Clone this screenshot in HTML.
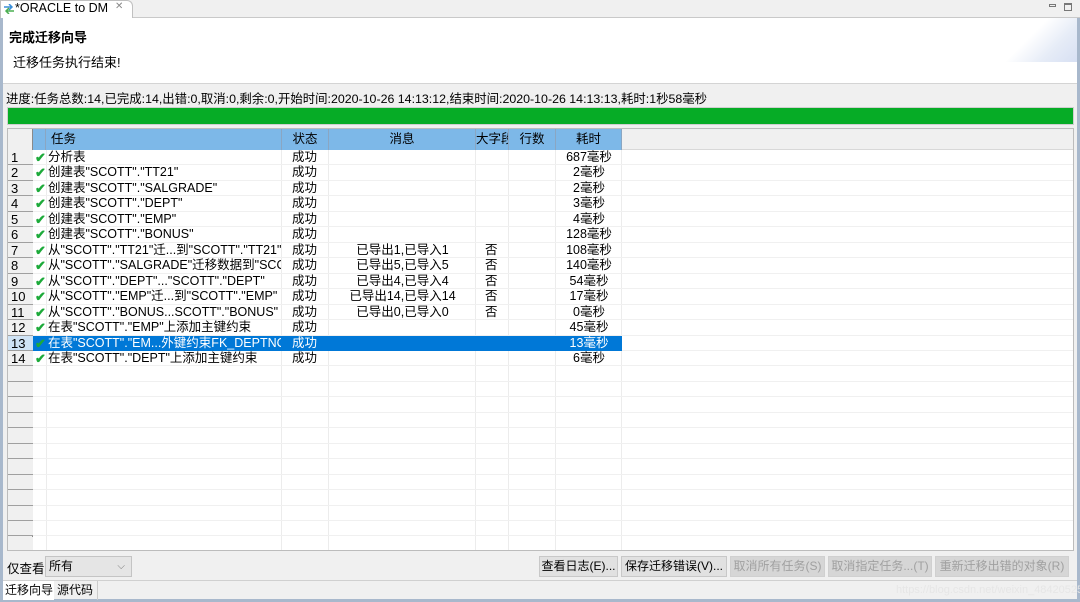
<!DOCTYPE html>
<html><head><meta charset="utf-8"><style>
*{margin:0;padding:0;box-sizing:border-box}
body{width:1080px;height:602px;overflow:hidden;background:#f0f0f0;position:relative;font-family:"Liberation Sans","Noto Sans CJK SC",sans-serif;font-size:12px;color:#000}
.a{position:absolute}
.btn{position:absolute;top:556px;height:21px;border:1px solid #c8c8c8;background:#e1e1e1;font-size:12px;line-height:19px;text-align:center;white-space:nowrap}
.dis{color:#a0a0a0;background:#d6d6d6;border-color:#d0d0d0}
.hc{position:absolute;top:0;height:21px;line-height:20px;border-right:1px solid #8aa6c2;text-align:center;overflow:hidden;white-space:nowrap;font-size:12.5px}
.row{position:absolute;left:0;height:15.46px;width:1066px;border-bottom:1px solid #f0f0f0}
.c{position:absolute;top:0;height:15px;line-height:15px;white-space:nowrap;overflow:hidden;font-size:12.5px}
.vl{position:absolute;top:21px;bottom:0;width:1px;background:#ececec}
</style></head><body>
<div class="a" style="left:0;top:0;width:1080px;height:18px;background:#f0f0f0;border-bottom:1px solid #c9c9c9"></div>
<div class="a" style="left:0;top:0;width:133px;height:18px;background:#fff;border:1px solid #c0c0c0;border-bottom:none;border-radius:0 6px 0 0"></div>
<svg class="a" style="left:3px;top:4px" width="12" height="10"><path d="M1 3h8M6 0l3 3-3 3" stroke="#3b8fd9" fill="none" stroke-width="1.5"/><path d="M11 7H3M6 4L3 7l3 3" stroke="#4caf50" fill="none" stroke-width="1.5"/></svg>
<div class="a" style="left:15px;top:1px;font-size:12.5px;color:#000">*ORACLE to DM</div>
<div class="a" style="left:115px;top:1px;font-size:10px;color:#888">✕</div>
<div class="a" style="left:1049px;top:4px;width:7px;height:3px;border:1px solid #777"></div>
<div class="a" style="left:1064px;top:3px;width:8px;height:8px;border:1px solid #777;border-top-width:2px"></div>
<div class="a" style="left:0;top:18px;width:3px;height:584px;background:#a8b8cc"></div>
<div class="a" style="left:1077px;top:18px;width:3px;height:584px;background:#a8b8cc"></div>
<div class="a" style="left:0;top:599px;width:1080px;height:3px;background:#a8b8cc"></div>
<div class="a" style="left:3px;top:18px;width:1074px;height:66px;background:#fff;border-bottom:1px solid #d4d4d4"></div>
<div class="a" style="left:1000px;top:18px;width:77px;height:44px;background:linear-gradient(135deg,#fff 40%,#e6ecf7 70%,#d7e0f3)"></div>
<div class="a" style="left:9px;top:27px;font-size:13px;font-weight:bold">完成迁移向导</div>
<div class="a" style="left:13px;top:52px;font-size:13px">迁移任务执行结束!</div>
<div class="a" style="left:6px;top:89px;font-size:12.4px">进度:任务总数:14,已完成:14,出错:0,取消:0,剩余:0,开始时间:2020-10-26 14:13:12,结束时间:2020-10-26 14:13:13,耗时:1秒58毫秒</div>
<div class="a" style="left:7px;top:107px;width:1067px;height:18px;background:#06ac26;border:1px solid #cfcfcf"></div>
<div class="a" style="left:7px;top:128px;width:1067px;height:423px;background:#fff;border:1px solid #bcbcbc;overflow:hidden">
 <div class="a" style="left:0;top:0;width:1067px;height:21px;background:#f0f0f0;border-bottom:1px solid #d8d8d8"></div>
 <div class="a" style="left:0;top:0;width:25px;height:100%;background:#f0f0f0;border-right:1px solid #8a8a8a"></div>
 <div class="a" style="left:25px;top:0;width:589px;height:21px;background:#7db8e8"></div>
 <div class="hc" style="left:25px;width:13px"></div>
 <div class="hc" style="left:38px;width:236px;text-align:left;padding-left:5px">任务</div>
 <div class="hc" style="left:274px;width:47px">状态</div>
 <div class="hc" style="left:321px;width:147px">消息</div>
 <div class="hc" style="left:468px;width:33px;text-align:left">大字段</div>
 <div class="hc" style="left:501px;width:47px">行数</div>
 <div class="hc" style="left:548px;width:66px">耗时</div>
 <div class="vl" style="left:38px"></div><div class="vl" style="left:273px"></div><div class="vl" style="left:320px"></div><div class="vl" style="left:467px"></div><div class="vl" style="left:500px"></div><div class="vl" style="left:547px"></div><div class="vl" style="left:613px"></div>
 <div id="rows"></div>
</div>
<div class="a" style="left:7px;top:558px;font-size:12.5px">仅查看</div>
<div class="a" style="left:45px;top:556px;width:87px;height:21px;background:#e5e5e5;border:1px solid #c4c4c4;font-size:12px;line-height:19px;padding-left:3px">所有<span style="position:absolute;right:6px;top:0;color:#777;font-size:10px">⌵</span></div>
<div class="btn" style="left:539px;width:79px">查看日志(E)...</div>
<div class="btn" style="left:621px;width:106px">保存迁移错误(V)...</div>
<div class="btn dis" style="left:730px;width:95px">取消所有任务(S)</div>
<div class="btn dis" style="left:828px;width:104px">取消指定任务...(T)</div>
<div class="btn dis" style="left:935px;width:134px">重新迁移出错的对象(R)</div>
<div class="a" style="left:3px;top:580px;width:1074px;height:1px;background:#d0d0d0"></div>
<div class="a" style="left:3px;top:581px;width:51px;height:19px;background:#fff;font-size:12px;line-height:18px;padding-left:2px">迁移向导</div>
<div class="a" style="left:54px;top:581px;width:44px;height:19px;border-right:1px solid #ccc;font-size:12px;line-height:18px;padding-left:3px">源代码</div>
<div class="a" style="left:896px;top:584px;font-size:11px;color:#e6e6e6">https://blog.csdn.net/weixin_48420525</div>
<script>
var d=[["分析表","","","687毫秒"],["创建表\"SCOTT\".\"TT21\"","","","2毫秒"],["创建表\"SCOTT\".\"SALGRADE\"","","","2毫秒"],["创建表\"SCOTT\".\"DEPT\"","","","3毫秒"],["创建表\"SCOTT\".\"EMP\"","","","4毫秒"],["创建表\"SCOTT\".\"BONUS\"","","","128毫秒"],["从\"SCOTT\".\"TT21\"迁...到\"SCOTT\".\"TT21\"","已导出1,已导入1","否","108毫秒"],["从\"SCOTT\".\"SALGRADE\"迁移数据到\"SCOTT\".\"SALGRADE\"","已导出5,已导入5","否","140毫秒"],["从\"SCOTT\".\"DEPT\"...\"SCOTT\".\"DEPT\"","已导出4,已导入4","否","54毫秒"],["从\"SCOTT\".\"EMP\"迁...到\"SCOTT\".\"EMP\"","已导出14,已导入14","否","17毫秒"],["从\"SCOTT\".\"BONUS...SCOTT\".\"BONUS\"","已导出0,已导入0","否","0毫秒"],["在表\"SCOTT\".\"EMP\"上添加主键约束","","","45毫秒"],["在表\"SCOTT\".\"EM...外键约束FK_DEPTNO","","","13毫秒"],["在表\"SCOTT\".\"DEPT\"上添加主键约束","","","6毫秒"]];
var h="";
for(var i=0;i<26;i++){var t=21+i*15.46;var r=d[i];var sel=i==12;
h+='<div class="row" style="top:'+t+'px">';
h+='<div class="c" style="left:0;width:25px;border-bottom:1px solid #a0a0a0;height:15.46px;font-size:13px;padding-left:3px;background:'+(sel?'#cfe3f5':'#f0f0f0')+'">'+(r?i+1:'')+'</div>';
if(sel)h+='<div class="c" style="left:25px;width:589px;background:#0078d7"></div>';
if(r){var col=sel?'#fff':'#000';
h+='<div class="c" style="left:27px;color:#1daa3a;font-weight:bold;font-size:13px">✔</div>';
h+='<div class="c" style="left:40px;width:233px;color:'+col+'">'+r[0]+'</div>';
h+='<div class="c" style="left:284px;color:'+col+'">成功</div>';
h+='<div class="c" style="left:321px;width:147px;text-align:center;color:'+col+'">'+r[1]+'</div>';
h+='<div class="c" style="left:477px;color:'+col+'">'+r[2]+'</div>';
h+='<div class="c" style="left:548px;width:66px;text-align:center;color:'+col+'">'+r[3]+'</div>';}
h+='</div>';}
document.getElementById('rows').innerHTML=h;
</script>
</body></html>
